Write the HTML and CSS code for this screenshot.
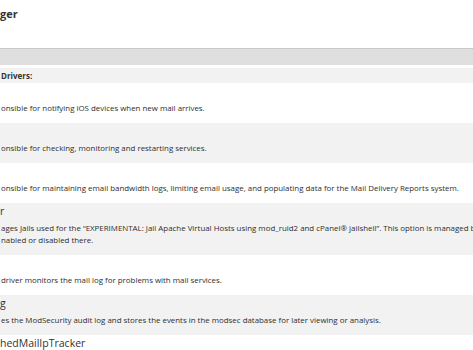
FILE: index.html
```html
<!DOCTYPE html>
<html lang="en">
<head>
    <meta charset="UTF-8">
    <meta name="viewport" content="width=device-width, initial-scale=1.0">
    <title>Service Manager</title>
    <link rel="stylesheet" href="styles.css">
</head>
<body>
    <div class="page">
        <h1 class="title">ger</h1>

        <div class="driver-table">
            <div class="table-head"></div>
            <div class="group-row">Drivers:</div>

            <div class="driver-row">
                <div class="driver-name"></div>
                <div class="driver-desc">onsible for notifying iOS devices when new mail arrives.</div>
            </div>
            <div class="driver-row alt">
                <div class="driver-name"></div>
                <div class="driver-desc">onsible for checking, monitoring and restarting services.</div>
            </div>
            <div class="driver-row">
                <div class="driver-name"></div>
                <div class="driver-desc">onsible for maintaining email bandwidth logs, limiting email usage, and populating data for the Mail Delivery Reports system.</div>
            </div>
            <div class="driver-row alt">
                <div class="driver-name">r</div>
                <div class="driver-desc">ages Jails used for the “EXPERIMENTAL: Jail Apache Virtual Hosts using mod_ruid2 and cPanel® jailshell”. This option is managed b<br>nabled or disabled there.</div>
            </div>
            <div class="driver-row">
                <div class="driver-name"></div>
                <div class="driver-desc">driver monitors the mail log for problems with mail services.</div>
            </div>
            <div class="driver-row alt">
                <div class="driver-name">g</div>
                <div class="driver-desc">es the ModSecurity audit log and stores the events in the modsec database for later viewing or analysis.</div>
            </div>
            <div class="driver-row">
                <div class="driver-name">hedMailIpTracker</div>
                <div class="driver-desc"></div>
            </div>
        </div>
    </div>
</body>
</html>
```

FILE: styles.css
```css
html, body {
    margin: 0;
    padding: 0;
    background: #ffffff;
    overflow: hidden;
}
body {
    font-family: "Open Sans", "Liberation Sans", sans-serif;
    color: #333333;
}
.page {
    padding-top: 6px;
}
.title {
    margin: 0 0 27px 0;
    font-size: 11px;
    line-height: 15px;
    font-weight: 700;
    color: #333333;
}
.table-head {
    height: 16px;
    background-color: #dfdfdf;
    border-top: 1px solid #c9c9c9;
    margin-bottom: 3px;
}
.group-row {
    height: 15px;
    line-height: 15px;
    font-size: 8px;
    font-weight: 700;
    padding-left: 1px;
    background-color: #f2f2f2;
}
.driver-row {
    padding: 1px 0 9px 0;
    background-color: #ffffff;
}
.driver-row.alt {
    background-color: #f2f2f2;
}
.driver-name {
    min-height: 14px;
    line-height: 14px;
    font-size: 10.5px;
}
.driver-desc {
    margin-top: 4px;
    padding-left: 1px;
    min-height: 12px;
    line-height: 12px;
    font-size: 7.9px;
    color: #2e2e2e;
    white-space: nowrap;
}
```
